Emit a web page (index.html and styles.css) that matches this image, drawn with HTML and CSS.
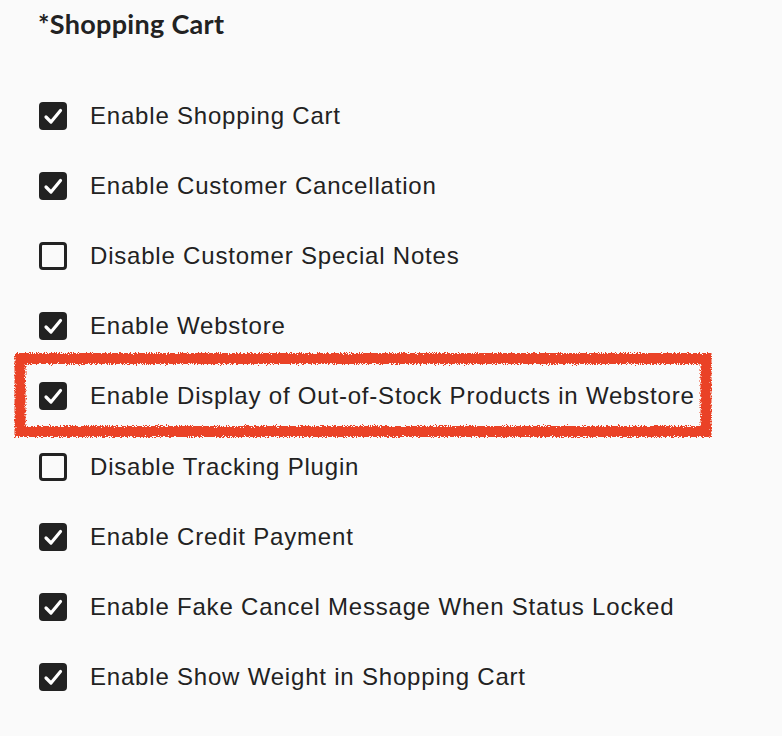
FILE: index.html
```html
<!DOCTYPE html>
<html lang="en">
<head>
    <meta charset="UTF-8">
    <meta name="viewport" content="width=device-width, initial-scale=1.0">
    <title>Shopping Cart Settings</title>
    <link rel="stylesheet" href="styles.css">
</head>
<body>
    <div class="settings-section">
        <h2 class="section-title">*Shopping Cart</h2>

        <ul class="option-list">
            <li class="option-row">
                <span class="check checked"><svg viewBox="0 0 28 28"><path d="M7 15 L12 20 L21.5 8.5"/></svg></span>
                <span class="option-label">Enable Shopping Cart</span>
            </li>
            <li class="option-row">
                <span class="check checked"><svg viewBox="0 0 28 28"><path d="M7 15 L12 20 L21.5 8.5"/></svg></span>
                <span class="option-label">Enable Customer Cancellation</span>
            </li>
            <li class="option-row">
                <span class="check"></span>
                <span class="option-label">Disable Customer Special Notes</span>
            </li>
            <li class="option-row">
                <span class="check checked"><svg viewBox="0 0 28 28"><path d="M7 15 L12 20 L21.5 8.5"/></svg></span>
                <span class="option-label">Enable Webstore</span>
            </li>
            <li class="option-row highlighted">
                <span class="check checked"><svg viewBox="0 0 28 28"><path d="M7 15 L12 20 L21.5 8.5"/></svg></span>
                <span class="option-label">Enable Display of Out-of-Stock Products in Webstore</span>
                <!-- annotation box drawn over the row -->
                <svg class="annotation" viewBox="0 0 698 86">
                    <defs>
                        <filter id="rough" x="-5%" y="-20%" width="110%" height="140%">
                            <feTurbulence type="fractalNoise" baseFrequency="0.9" numOctaves="2" seed="3" result="noise"/>
                            <feDisplacementMap in="SourceGraphic" in2="noise" scale="6" xChannelSelector="R" yChannelSelector="G"/>
                        </filter>
                    </defs>
                    <rect x="6" y="6.5" width="686" height="73" fill="none" stroke="#ea4226" stroke-width="11" filter="url(#rough)"/>
                </svg>
            </li>
            <li class="option-row">
                <span class="check"></span>
                <span class="option-label">Disable Tracking Plugin</span>
            </li>
            <li class="option-row">
                <span class="check checked"><svg viewBox="0 0 28 28"><path d="M7 15 L12 20 L21.5 8.5"/></svg></span>
                <span class="option-label">Enable Credit Payment</span>
            </li>
            <li class="option-row">
                <span class="check checked"><svg viewBox="0 0 28 28"><path d="M7 15 L12 20 L21.5 8.5"/></svg></span>
                <span class="option-label">Enable Fake Cancel Message When Status Locked</span>
            </li>
            <li class="option-row">
                <span class="check checked"><svg viewBox="0 0 28 28"><path d="M7 15 L12 20 L21.5 8.5"/></svg></span>
                <span class="option-label">Enable Show Weight in Shopping Cart</span>
            </li>
        </ul>
    </div>
</body>
</html>
```

FILE: styles.css
```css
* {
    margin: 0;
    padding: 0;
    box-sizing: border-box;
}

body {
    background-color: #fafafa;
    color: #222;
    font-family: 'Liberation Sans', Arial, sans-serif;
}

.settings-section {
    padding: 0 0 0 39px;
}

.section-title {
    font-family: Lato, 'Liberation Sans', sans-serif;
    font-weight: 700;
    font-size: 27px;
    letter-spacing: 0.3px;
    line-height: 48px;
    margin-left: -1px;
    color: #222;
}

.option-list {
    list-style: none;
    margin-top: 33px;
}

.option-row {
    display: flex;
    align-items: center;
    height: 70.1px;
    position: relative;
}

.check {
    width: 28px;
    height: 28px;
    border: 3px solid #222;
    border-radius: 4px;
    background: #fafafa;
    flex-shrink: 0;
    display: flex;
    align-items: center;
    justify-content: center;
}

.check.checked {
    background: #222;
    border: none;
}

.check svg {
    width: 28px;
    height: 28px;
}

.check svg path {
    fill: none;
    stroke: #fff;
    stroke-width: 3.2;
    stroke-linecap: round;
    stroke-linejoin: round;
}

.option-label {
    margin-left: 23px;
    font-size: 24px;
    letter-spacing: 0.8px;
    color: #222;
}

.annotation {
    position: absolute;
    left: -25px;
    top: -9px;
    width: 698px;
    height: 86px;
    pointer-events: none;
}
```
